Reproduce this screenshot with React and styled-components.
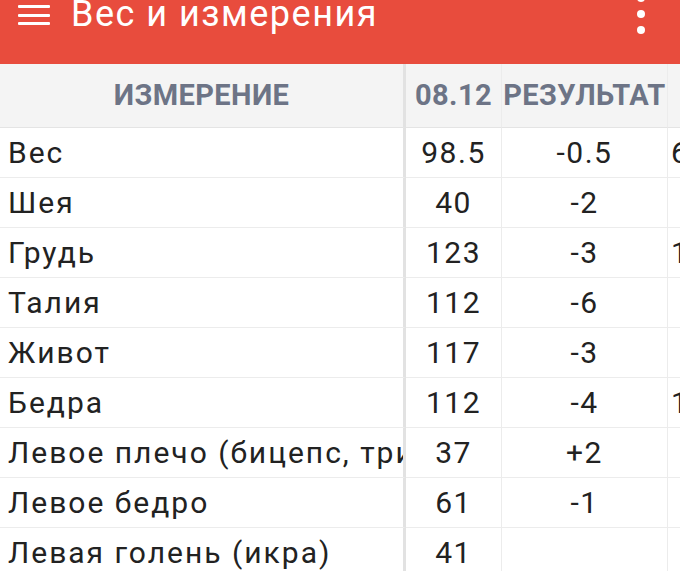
import React from 'react'
import styled, { createGlobalStyle } from 'styled-components'

const GlobalStyle = createGlobalStyle`
  html, body {
    margin: 0;
    padding: 0;
    background: #ffffff;
    overflow: hidden;
  }
  body {
    font-family: Roboto, 'Noto Sans', sans-serif;
  }
`

const rows = [
  { name: 'Вес', value: '98.5', result: '-0.5', next: '6' },
  { name: 'Шея', value: '40', result: '-2', next: '' },
  { name: 'Грудь', value: '123', result: '-3', next: '1' },
  { name: 'Талия', value: '112', result: '-6', next: '' },
  { name: 'Живот', value: '117', result: '-3', next: '' },
  { name: 'Бедра', value: '112', result: '-4', next: '1' },
  { name: 'Левое плечо (бицепс, трицепс)', value: '37', result: '+2', next: '' },
  { name: 'Левое бедро', value: '61', result: '-1', next: '' },
  { name: 'Левая голень (икра)', value: '41', result: '', next: '' },
]

function App() {
  return (
    <>
      <GlobalStyle />
      <Page>
        <Toolbar>
          <Hamburger>
            <span />
            <span />
            <span />
          </Hamburger>
          <Title>Вес и измерения</Title>
          <Kebab>
            <i />
            <i />
            <i />
          </Kebab>
        </Toolbar>
        <Table>
          <HeadCell $first>ИЗМЕРЕНИЕ</HeadCell>
          <HeadCell>08.12</HeadCell>
          <HeadCell>РЕЗУЛЬТАТ</HeadCell>
          <HeadCell />
          {rows.map((row) => (
            <React.Fragment key={row.name}>
              <NameCell>{row.name}</NameCell>
              <Cell>{row.value}</Cell>
              <Cell>{row.result}</Cell>
              <Cell $left>{row.next}</Cell>
            </React.Fragment>
          ))}
        </Table>
      </Page>
    </>
  )
}

const Page = styled.div`
  width: 680px;
  height: 571px;
  overflow: hidden;
  background: #ffffff;
`

const Toolbar = styled.header`
  height: 64px;
  background: #e84c3d;
  display: flex;
  align-items: flex-start;
  padding: 0 0 0 18px;
  box-sizing: border-box;
  overflow: hidden;
`

const Hamburger = styled.div`
  width: 32px;
  display: flex;
  flex-direction: column;
  gap: 5.5px;
  padding-top: 5px;

  span {
    display: block;
    height: 3px;
    background: #ffffff;
    border-radius: 1px;
  }
`

const Title = styled.h1`
  margin: -6px 0 0 21px;
  font-family: Roboto, sans-serif;
  font-weight: 400;
  font-size: 36px;
  line-height: 40px;
  letter-spacing: 1.5px;
  color: #ffffff;
  flex: 1;
  white-space: nowrap;
`

const Kebab = styled.div`
  width: 8px;
  margin: -6px 35px 0 0;
  display: flex;
  flex-direction: column;
  gap: 8px;

  i {
    display: block;
    width: 8px;
    height: 8px;
    border-radius: 50%;
    background: #ffffff;
  }
`

const Table = styled.div`
  display: grid;
  grid-template-columns: 406px 96px 166px 60px;
  grid-template-rows: 64px;
  grid-auto-rows: 50px;
`

const HeadCell = styled.div`
  background: #f4f4f4;
  display: flex;
  align-items: center;
  justify-content: center;
  padding-bottom: 2px;
  font-family: Roboto, sans-serif;
  font-weight: 700;
  font-size: 29px;
  letter-spacing: 0.4px;
  color: #6d7486;
  border-bottom: 1px solid #e4e4e4;
  border-right: ${(p) => (p.$first ? '3px solid #e2e2e2' : '1px solid #ececec')};
  box-sizing: border-box;
  white-space: nowrap;
  overflow: hidden;
`

const NameCell = styled.div`
  display: flex;
  align-items: center;
  padding-left: 8px;
  font-family: Roboto, sans-serif;
  font-size: 30px;
  letter-spacing: 2px;
  color: #222222;
  border-bottom: 1px solid #ececec;
  border-right: 3px solid #e2e2e2;
  box-sizing: border-box;
  white-space: nowrap;
  overflow: hidden;
`

const Cell = styled.div`
  display: flex;
  align-items: center;
  justify-content: ${(p) => (p.$left ? 'flex-start' : 'center')};
  padding-left: ${(p) => (p.$left ? '3px' : '0')};
  font-family: Roboto, sans-serif;
  font-size: 30px;
  letter-spacing: 1.5px;
  color: #222222;
  border-bottom: 1px solid #ececec;
  border-right: 1px solid #ececec;
  box-sizing: border-box;
  white-space: nowrap;
  overflow: hidden;
`

export default App
